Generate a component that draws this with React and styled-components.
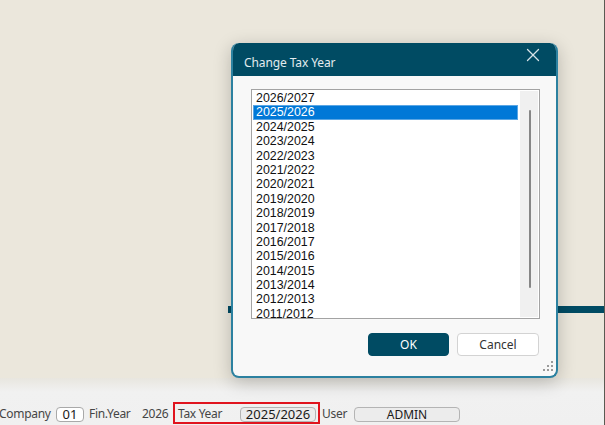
import React from "react";
import styled, { createGlobalStyle } from "styled-components";
import { X } from "lucide-react";

const Global = createGlobalStyle`
  html, body { margin: 0; padding: 0; }
  body { width: 605px; height: 425px; overflow: hidden; font-family: "Noto Sans", "Open Sans", sans-serif; }
  * { box-sizing: border-box; }
`;

const Page = styled.div`
  width: 605px;
  height: 425px;
  display: flex;
  flex-direction: column;
  position: relative;
  border-right: 1px solid #5a5a52;
  overflow: hidden;
`;

const Workspace = styled.div`
  height: 378px;
  background: #ebe7dc;
  padding-top: 306px;
`;

const TabStrip = styled.div`
  margin-left: 228px;
  height: 7px;
  background: #004b63;
`;

const StatusBar = styled.div`
  flex: 1;
  background: linear-gradient(#e8e6df 0px, #f1f1f1 14px, #f0f0f0 100%);
  display: flex;
  align-items: flex-end;
  padding-bottom: 1px;
`;

const StatusRow = styled.div`
  display: flex;
  align-items: center;
  height: 22px;
  margin-left: -1px;
`;

const Label = styled.span`
  width: ${(p) => p.$w}px;
  padding-left: ${(p) => p.$pl || 0}px;
  padding-top: 2px;
  font-size: 12px;
  letter-spacing: -0.3px;
  color: #454545;
  white-space: nowrap;
  line-height: 16px;
`;

const Field = styled.div`
  width: ${(p) => p.$w}px;
  height: 15px;
  margin-top: 2px;
  border: 1px solid ${(p) => (p.$white ? "#a9a9a9" : "#b4b4b4")};
  border-radius: 4px;
  background: ${(p) => (p.$white ? "#ffffff" : "#ececec")};
  display: flex;
  align-items: center;
  justify-content: center;
  font-size: ${(p) => p.$fs || 12}px;
  color: #1a1a1a;
  line-height: 13px;
`;

const RedFrame = styled.div`
  width: 147px;
  height: 22px;
  border: 2px solid #e0141e;
  display: flex;
  align-items: center;
  margin-right: 2px;
`;

const Dialog = styled.div`
  position: absolute;
  left: 231px;
  top: 43px;
  width: 327px;
  height: 335px;
  border-radius: 8px;
  background: #f8f8f8;
  border: 2px solid #2c81a0;
  border-top: none;
  box-shadow: 0 4px 18px rgba(0, 0, 0, 0.22);
  display: flex;
  flex-direction: column;
  overflow: hidden;
`;

const TitleBar = styled.div`
  height: 33px;
  margin: 0 -2px;
  background: #004b63;
  display: flex;
  align-items: center;
  justify-content: space-between;
  padding: 6px 14px 0 13px;
  border-radius: 8px 8px 0 0;
`;

const Title = styled.span`
  color: #e3ecef;
  font-size: 12px;
  letter-spacing: -0.1px;
`;

const CloseBtn = styled.span`
  display: flex;
  align-self: flex-start;
  margin-top: -5px;
  color: #d6e2e7;
`;

const Body = styled.div`
  flex: 1;
  padding: 13px 17px 0 18px;
  display: flex;
  flex-direction: column;
  position: relative;
`;

const ListBox = styled.div`
  width: 289px;
  height: 230px;
  border: 1px solid #a3a3a3;
  background: #ffffff;
  display: flex;
  padding: 1px 1px 0 1px;
  overflow: hidden;
`;

const Rows = styled.div`
  width: 265px;
`;

const Row = styled.div`
  height: 14.4px;
  line-height: 14.4px;
  padding-left: 3px;
  font-family: "Liberation Sans", Arial, sans-serif;
  font-size: 12.4px;
  color: ${(p) => (p.$sel ? "#ffffff" : "#111111")};
  background: ${(p) => (p.$sel ? "#0078d7" : "transparent")};
  box-shadow: ${(p) => (p.$sel ? "inset 0 0 0 1px #5aa6e4" : "none")};
`;

const ScrollTrack = styled.div`
  width: 18px;
  margin-left: 2px;
  margin-bottom: 1px;
  background: #f0f0f0;
  display: flex;
  justify-content: center;
  padding-top: 19px;
`;

const Thumb = styled.div`
  width: 2px;
  height: 178px;
  border-radius: 1px;
  background: #868686;
  margin-left: 1px;
`;

const Buttons = styled.div`
  display: flex;
  gap: 8px;
  margin-top: 14px;
  padding-left: 117px;
`;

const Button = styled.button`
  width: ${(p) => p.$w}px;
  height: 23px;
  border-radius: 4px;
  font-family: "Noto Sans", sans-serif;
  font-size: 12px;
  padding: 0;
  line-height: 20px;
  cursor: pointer;
  border: 1px solid ${(p) => (p.$primary ? "#004b63" : "#d3d3d3")};
  background: ${(p) => (p.$primary ? "#004b63" : "#ffffff")};
  color: ${(p) => (p.$primary ? "#ffffff" : "#333333")};
`;

const Grip = styled.svg`
  position: absolute;
  right: 3px;
  bottom: 5px;
`;

const years = [];
for (let y = 2026; y >= 2011; y--) years.push(`${y}/${y + 1}`);

export default function App() {
  return (
    <>
      <Global />
      <Page>
        <Workspace>
          <TabStrip />
        </Workspace>
        <StatusBar>
          <StatusRow>
            <Label $w={57}>Company</Label>
            <Field $w={28} $white $fs={13}>01</Field>
            <Label $w={58} $pl={5}>Fin.Year</Label>
            <Label $w={31}>2026</Label>
            <RedFrame>
              <Label $w={65} $pl={3}>Tax Year</Label>
              <Field $w={76} $fs={13}>2025/2026</Field>
            </RedFrame>
            <Label $w={32}>User</Label>
            <Field $w={106}>ADMIN</Field>
          </StatusRow>
        </StatusBar>
        <Dialog>
          <TitleBar>
            <Title>Change Tax Year</Title>
            <CloseBtn>
              <X size={22} strokeWidth={1.4} />
            </CloseBtn>
          </TitleBar>
          <Body>
            <ListBox>
              <Rows>
                {years.map((y) => (
                  <Row key={y} $sel={y === "2025/2026"}>
                    {y}
                  </Row>
                ))}
              </Rows>
              <ScrollTrack>
                <Thumb />
              </ScrollTrack>
            </ListBox>
            <Buttons>
              <Button $primary $w={81}>OK</Button>
              <Button $w={82}>Cancel</Button>
            </Buttons>
            <Grip width="10" height="10" viewBox="0 0 10 10">
              <g fill="#9a9a9a">
                <rect x="8" y="0" width="2" height="2" />
                <rect x="4" y="4" width="2" height="2" />
                <rect x="8" y="4" width="2" height="2" />
                <rect x="0" y="8" width="2" height="2" />
                <rect x="4" y="8" width="2" height="2" />
                <rect x="8" y="8" width="2" height="2" />
              </g>
            </Grip>
          </Body>
        </Dialog>
      </Page>
    </>
  );
}
